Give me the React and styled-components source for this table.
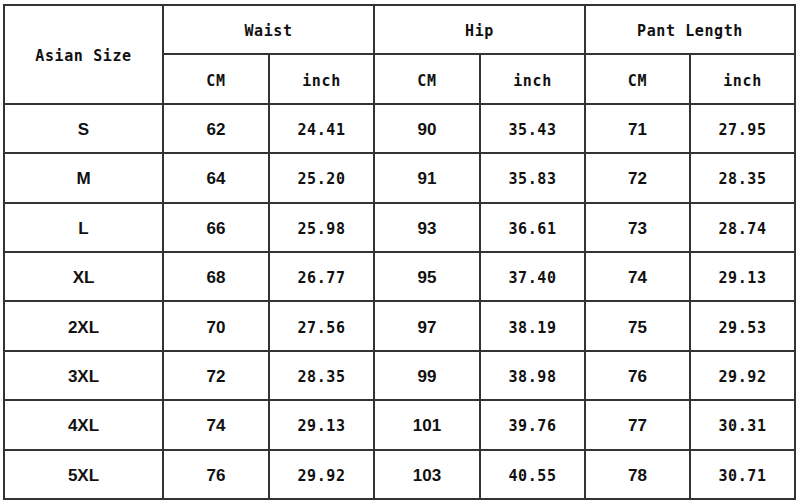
import React from "react";
import styled, { createGlobalStyle } from "styled-components";

const Global = createGlobalStyle`
  html, body { margin: 0; padding: 0; background: #fff; }
  body { width: 800px; height: 502px; overflow: hidden; }
`;

const Page = styled.div`
  padding: 4px 0 0 3px;
`;

const Grid = styled.div`
  display: grid;
  grid-template-columns: 157px 104px 103px 104px 103px 103px 103px;
  grid-template-rows: repeat(10, 1fr);
  gap: 2px;
  padding: 2px;
  width: 793px;
  height: 496px;
  box-sizing: border-box;
  background: #333;
`;

const Cell = styled.div`
  display: flex;
  align-items: center;
  justify-content: center;
  padding-top: 3px;
  background: #fff;
  color: #111;
  font-weight: bold;
  grid-column: span ${(p) => p.$cols || 1};
  grid-row: span ${(p) => p.$rows || 1};
  font-family: ${(p) =>
    p.$mono
      ? '"DejaVu Sans Mono", "Liberation Mono", monospace'
      : '"Liberation Sans", Arial, sans-serif'};
  font-size: ${(p) => (p.$mono ? "15px" : "17px")};
  letter-spacing: ${(p) => (p.$mono ? "0.6px" : "0")};
`;

const rows = [
  ["S", "62", "24.41", "90", "35.43", "71", "27.95"],
  ["M", "64", "25.20", "91", "35.83", "72", "28.35"],
  ["L", "66", "25.98", "93", "36.61", "73", "28.74"],
  ["XL", "68", "26.77", "95", "37.40", "74", "29.13"],
  ["2XL", "70", "27.56", "97", "38.19", "75", "29.53"],
  ["3XL", "72", "28.35", "99", "38.98", "76", "29.92"],
  ["4XL", "74", "29.13", "101", "39.76", "77", "30.31"],
  ["5XL", "76", "29.92", "103", "40.55", "78", "30.71"],
];

export default function App() {
  return (
    <>
      <Global />
      <Page>
        <Grid>
          <Cell $mono $rows={2}>Asian Size</Cell>
          <Cell $mono $cols={2}>Waist</Cell>
          <Cell $mono $cols={2}>Hip</Cell>
          <Cell $mono $cols={2}>Pant Length</Cell>
          {["CM", "inch", "CM", "inch", "CM", "inch"].map((t, i) => (
            <Cell $mono key={"h" + i}>{t}</Cell>
          ))}
          {rows.map((r) =>
            r.map((v, i) => (
              <Cell key={r[0] + i} $mono={v.includes(".")}>
                {v}
              </Cell>
            ))
          )}
        </Grid>
      </Page>
    </>
  );
}
